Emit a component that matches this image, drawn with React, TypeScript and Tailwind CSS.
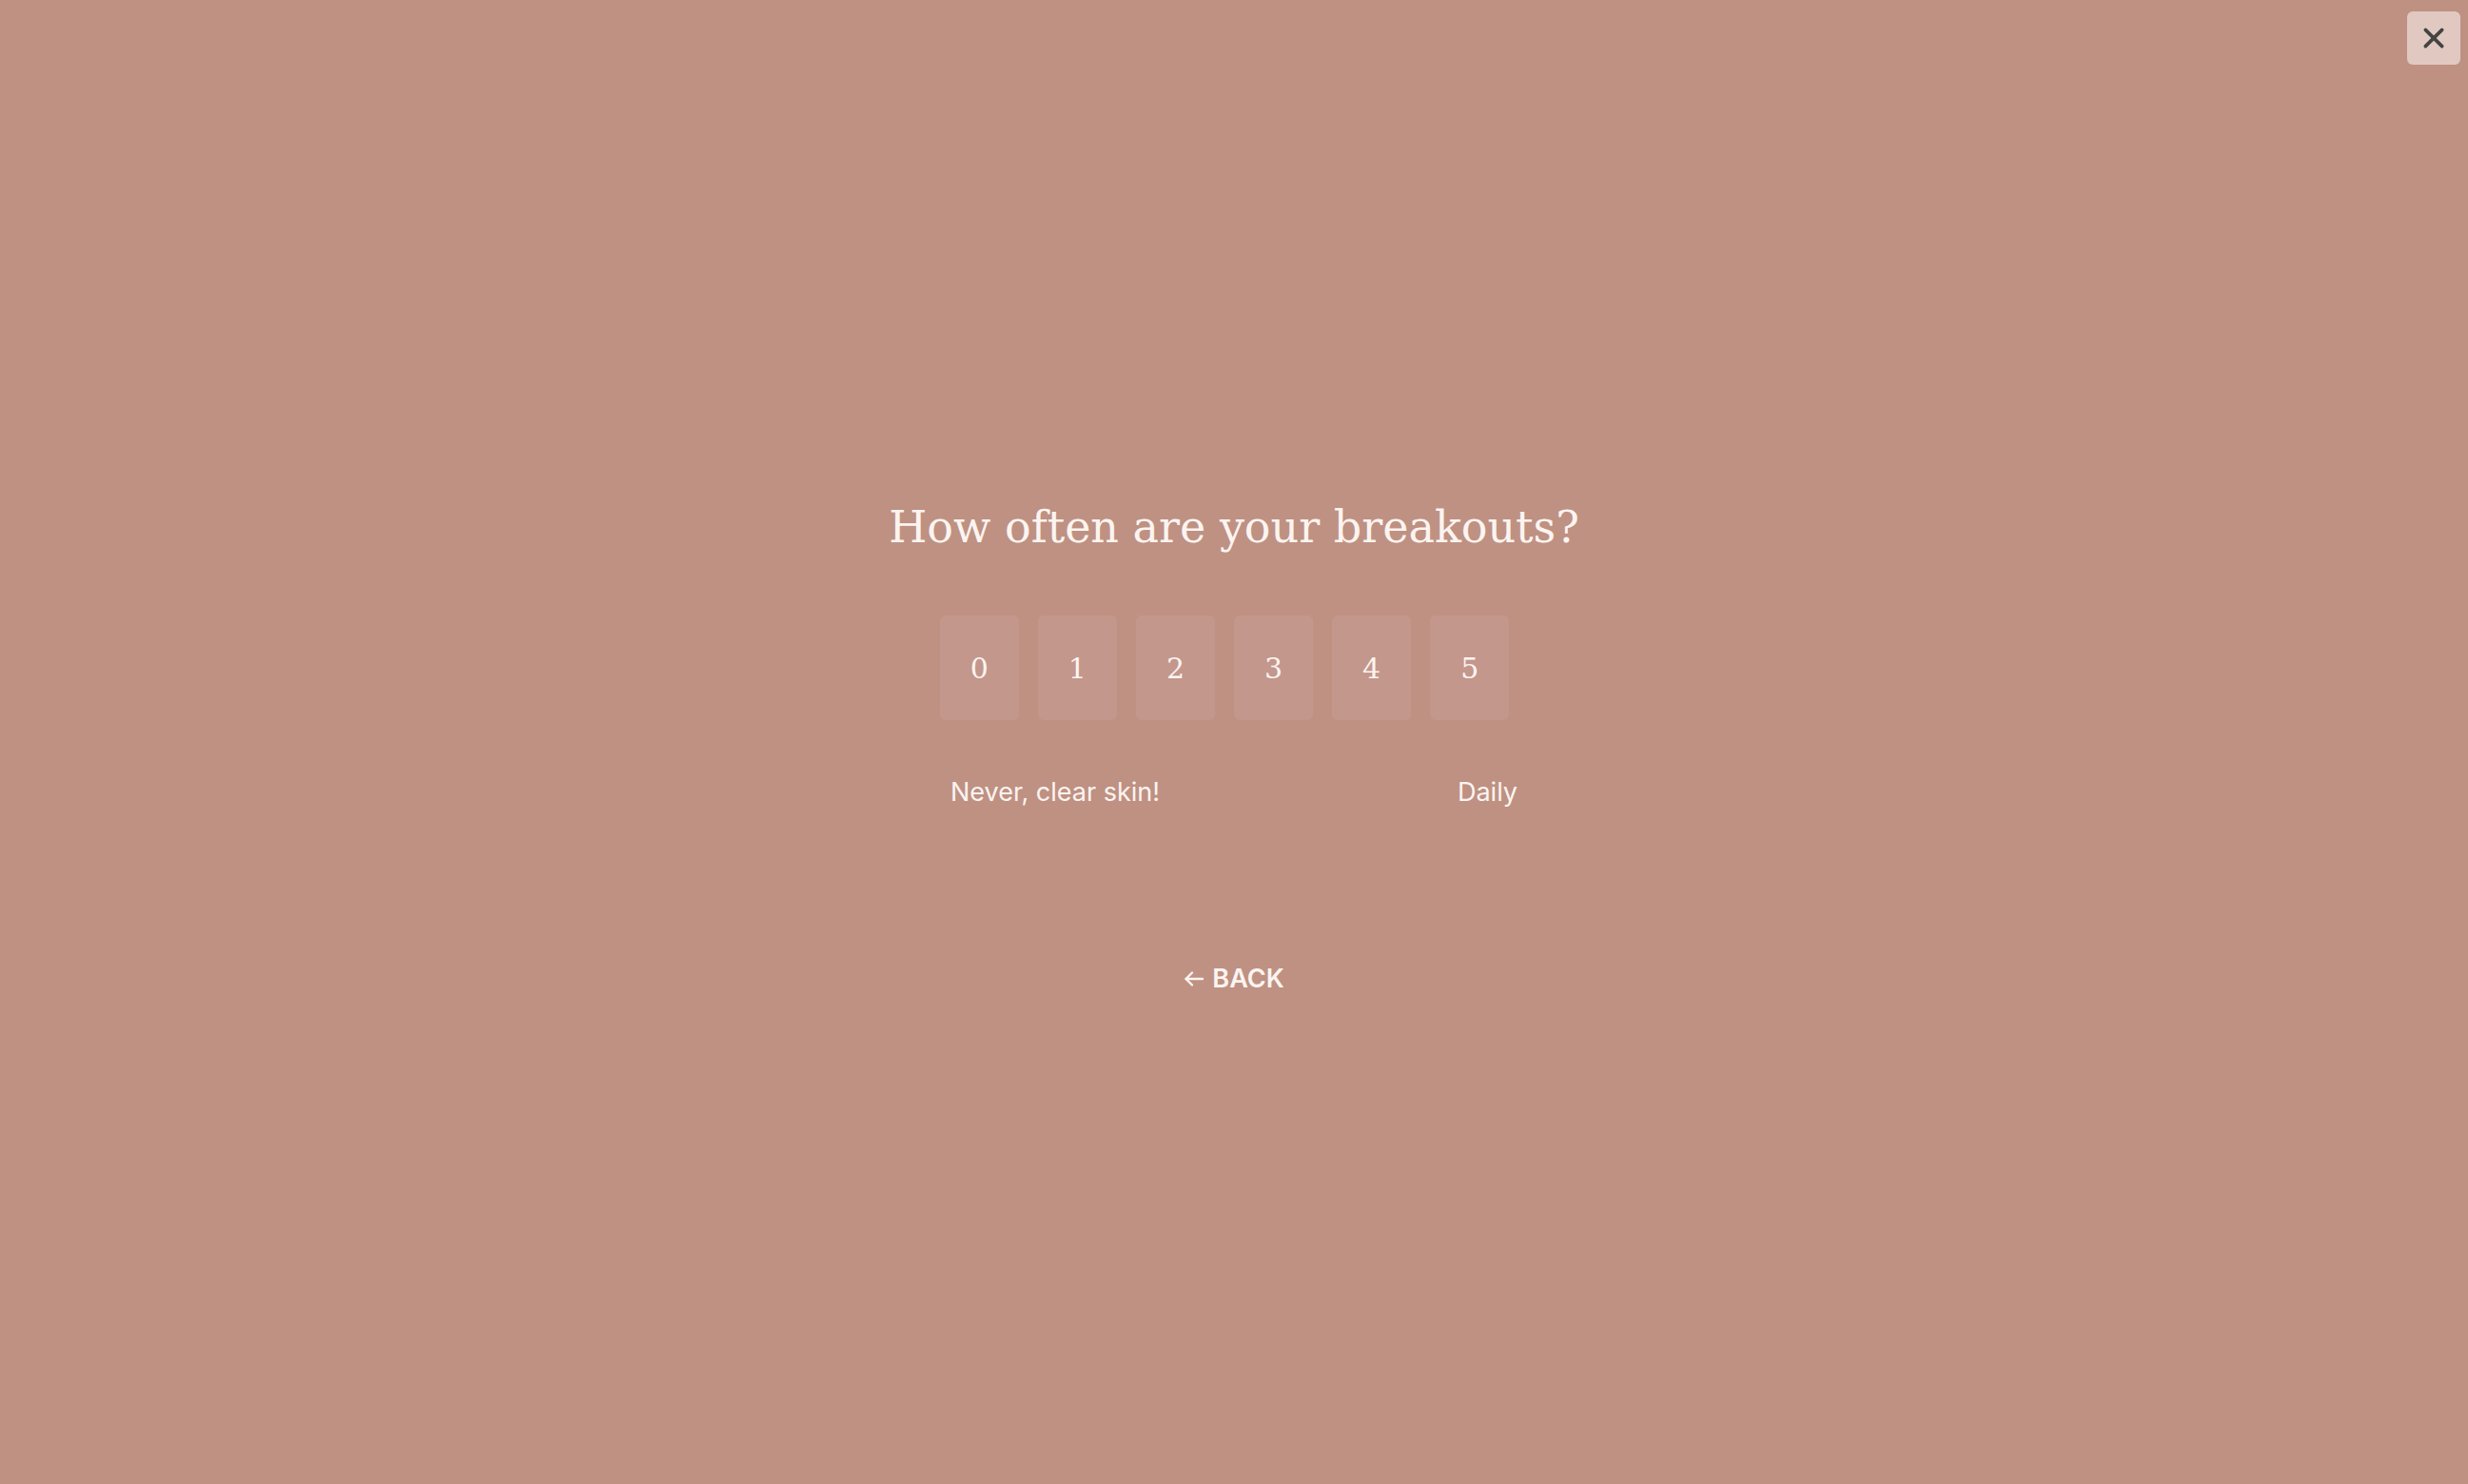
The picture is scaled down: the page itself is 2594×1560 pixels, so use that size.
import * as React from "react";

const OPTIONS = [0, 1, 2, 3, 4, 5];

export default function App() {
  const [picked, setPicked] = React.useState<number | null>(null);

  return (
    <div className="relative flex min-h-screen w-full flex-col items-center justify-center bg-[#bf9182] pt-[9px] text-[#fbf4f1]">
      {/* close */}
      <button
        type="button"
        aria-label="Close"
        className="absolute right-2 top-3 flex h-14 w-14 items-center justify-center rounded-md bg-[#e1c9c2]"
      >
        <svg width="26" height="26" viewBox="0 0 24 24" fill="none" stroke="#444444" strokeWidth="3.4" strokeLinecap="round">
          <line x1="4" y1="4" x2="20" y2="20" />
          <line x1="20" y1="4" x2="4" y2="20" />
        </svg>
      </button>

      <h1 className="font-['DejaVu_Serif','Liberation_Serif',serif] text-[46px] font-normal leading-[62px]">
        How often are your breakouts?
      </h1>

      <div className="mt-[62px] flex items-center">
        {OPTIONS.map((n) => (
          <button
            key={n}
            type="button"
            onClick={() => setPicked(n)}
            className={[
              "mr-[20px] flex h-[110px] items-center justify-center rounded-md px-[32px] font-['DejaVu_Serif','Liberation_Serif',serif] text-[30px]",
              picked === n ? "bg-[#cfa79d]" : "bg-[#c4978c]",
            ].join(" ")}
          >
            {n}
          </button>
        ))}
      </div>

      <div className="mt-[59px] flex w-[612px] justify-between px-2 font-['Inter','Noto_Sans',sans-serif] text-[27px] leading-[34px]">
        <span>Never, clear skin!</span>
        <span>Daily</span>
      </div>

      <button
        type="button"
        className="mt-[162px] flex items-center gap-[8px] font-['Inter','Noto_Sans',sans-serif] text-[27px] font-semibold leading-[34px]"
      >
        <svg width="22" height="18" viewBox="0 0 22 18" fill="none" stroke="currentColor" strokeWidth="2.4" strokeLinecap="round" strokeLinejoin="round">
          <line x1="20" y1="9" x2="2.5" y2="9" />
          <polyline points="9,2.5 2.5,9 9,15.5" />
        </svg>
        BACK
      </button>
    </div>
  );
}
